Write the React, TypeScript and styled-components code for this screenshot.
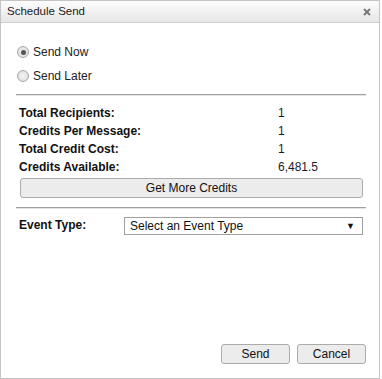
import styled, { createGlobalStyle } from "styled-components";

const GlobalStyle = createGlobalStyle`
  body {
    margin: 0;
    background: #fff;
    font-family: "Liberation Sans", Arial, sans-serif;
    color: #222;
  }
`;

const Dialog = styled.div`
  width: 380px;
  height: 379px;
  box-sizing: border-box;
  border: 1px solid #c4c4c4;
  display: flex;
  flex-direction: column;
  background: #fff;
`;

const TitleBar = styled.div`
  height: 22px;
  box-sizing: border-box;
  border-bottom: 1px solid #cfcfcf;
  background: linear-gradient(#fdfdfd, #e6e6e6);
  display: flex;
  align-items: center;
  justify-content: space-between;
  padding: 0 7px 1px 6px;
  font-size: 11.5px;
  color: #222;
`;

const CloseButton = styled.span`
  display: flex;
  width: 10px;
  height: 10px;
  align-items: center;
  justify-content: center;
  margin-top: 2px;
`;

const Body = styled.div`
  flex: 1;
  display: flex;
  flex-direction: column;
  padding: 20px 13px 14px 15px;
`;

const RadioGroup = styled.div`
  display: flex;
  flex-direction: column;
  gap: 6px;
  padding-bottom: 9px;
`;

const RadioRow = styled.label`
  display: flex;
  align-items: center;
  height: 18px;
  font-size: 12px;
  gap: 4px;
`;

const RadioDot = styled.span<{ $checked?: boolean }>`
  width: 12px;
  height: 12px;
  border-radius: 50%;
  box-sizing: border-box;
  border: 1px solid #a8a8a8;
  background: radial-gradient(circle, #f4f4f4, #dadada);
  display: flex;
  align-items: center;
  justify-content: center;
  margin-left: 1px;
  &::after {
    content: "";
    width: 5px;
    height: 5px;
    border-radius: 50%;
    background: ${(p) => (p.$checked ? "#555" : "transparent")};
  }
`;

const Rule = styled.hr`
  margin: 0;
  border: none;
  border-top: 1px solid #a0a0a0;
  border-bottom: 1px solid #e4e4e4;
`;

const Summary = styled.div`
  padding: 8px 3px 0 3px;
  display: flex;
  flex-direction: column;
`;

const SummaryRow = styled.div`
  display: grid;
  grid-template-columns: 259px 1fr;
  height: 18px;
  line-height: 18px;
  font-size: 12px;
`;

const Label = styled.span`
  font-weight: bold;
  color: #111;
`;

const Value = styled.span`
  color: #1a1a2a;
`;

const Button = styled.button<{ $wide?: boolean }>`
  font-family: "Liberation Sans", Arial, sans-serif;
  font-size: 12px;
  color: #111;
  height: 20px;
  width: ${(p) => (p.$wide ? "100%" : "69px")};
  box-sizing: border-box;
  border: 1px solid #ababab;
  border-radius: 3px;
  background: #ececec;
  padding: 0;
`;

const CreditsButtonWrap = styled.div`
  padding: 2px 0 9px 1px;
`;

const EventRow = styled.div`
  display: flex;
  align-items: center;
  padding: 8px 3px 0 3px;
  font-size: 12px;
`;

const EventLabel = styled.span`
  font-weight: bold;
  width: 105px;
  color: #111;
  margin-top: -2px;
`;

const Select = styled.div`
  flex: 1;
  height: 18px;
  box-sizing: border-box;
  border: 1px solid #a0a0a0;
  background: #fff;
  display: flex;
  align-items: center;
  justify-content: space-between;
  padding: 0 7px 0 5px;
  font-size: 12px;
  color: #111;
`;

const Arrow = styled.span`
  font-size: 9px;
  color: #111;
`;

const Footer = styled.div`
  margin-top: auto;
  display: flex;
  justify-content: flex-end;
  gap: 7px;
`;

export default function App() {
  return (
    <>
      <GlobalStyle />
      <Dialog>
        <TitleBar>
          <span>Schedule Send</span>
          <CloseButton>
            <svg width="8" height="8" viewBox="0 0 8 8">
              <path d="M1 1L7 7M7 1L1 7" stroke="#7a7a7a" strokeWidth="2" />
            </svg>
          </CloseButton>
        </TitleBar>
        <Body>
          <RadioGroup>
            <RadioRow>
              <RadioDot $checked />
              Send Now
            </RadioRow>
            <RadioRow>
              <RadioDot />
              Send Later
            </RadioRow>
          </RadioGroup>
          <Rule />
          <Summary>
            <SummaryRow>
              <Label>Total Recipients:</Label>
              <Value>1</Value>
            </SummaryRow>
            <SummaryRow>
              <Label>Credits Per Message:</Label>
              <Value>1</Value>
            </SummaryRow>
            <SummaryRow>
              <Label>Total Credit Cost:</Label>
              <Value>1</Value>
            </SummaryRow>
            <SummaryRow>
              <Label>Credits Available:</Label>
              <Value>6,481.5</Value>
            </SummaryRow>
            <CreditsButtonWrap>
              <Button $wide>Get More Credits</Button>
            </CreditsButtonWrap>
          </Summary>
          <Rule />
          <EventRow>
            <EventLabel>Event Type:</EventLabel>
            <Select>
              <span>Select an Event Type</span>
              <Arrow>▼</Arrow>
            </Select>
          </EventRow>
          <Footer>
            <Button>Send</Button>
            <Button>Cancel</Button>
          </Footer>
        </Body>
      </Dialog>
    </>
  );
}
